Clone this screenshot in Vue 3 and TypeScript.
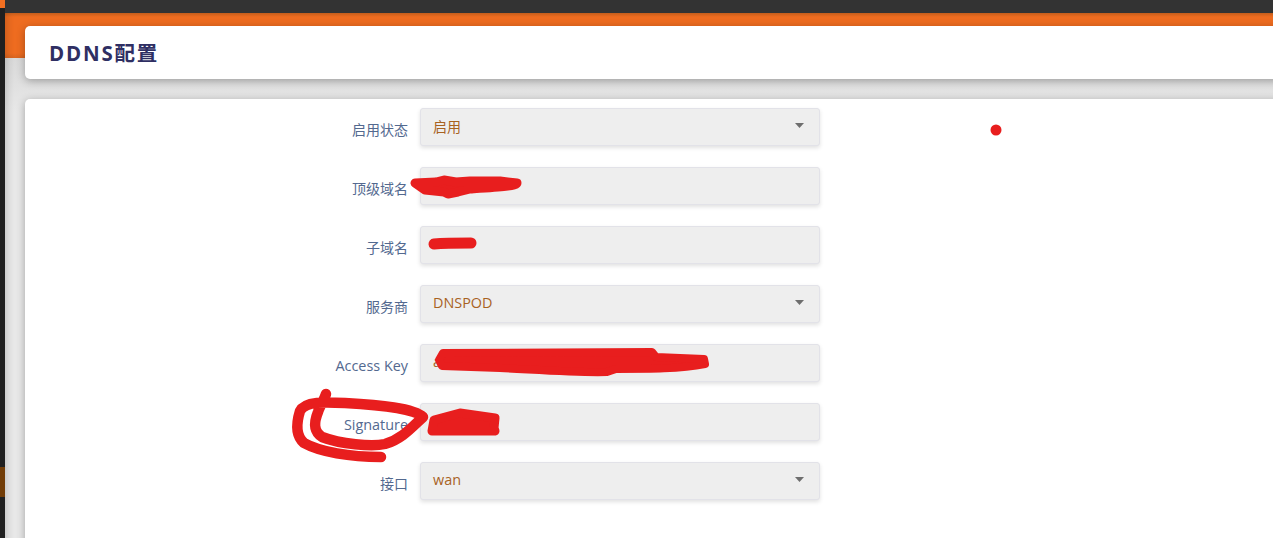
<script setup lang="ts">
interface Field {
  label: string
  value: string
  select: boolean
}

const fields: Field[] = [
  { label: '启用状态', value: '启用', select: true },
  { label: '顶级域名', value: '', select: false },
  { label: '子域名', value: '', select: false },
  { label: '服务商', value: 'DNSPOD', select: true },
  { label: 'Access Key', value: 'a', select: false },
  { label: 'Signature', value: '', select: false },
  { label: '接口', value: 'wan', select: true },
]

const isLatin = (s: string): boolean => /^[\x20-\x7e]+$/.test(s)
</script>

<template>
  <div class="page">
    <aside class="rail">
      <div class="rail-top"></div>
      <div class="rail-mark"></div>
    </aside>
    <div class="shell">
      <div class="topbar"></div>
      <main class="main">
        <header class="card title-card">
          <h1 class="title">DDNS配置</h1>
        </header>
        <section class="card form-card">
          <div v-for="f in fields" :key="f.label" class="row">
            <label class="label" :class="{ latin: isLatin(f.label) }">{{ f.label }}</label>
            <div class="control">
              <span class="value" :class="{ latin: isLatin(f.value) }">{{ f.value }}</span>
              <svg v-if="f.select" class="caret" width="9" height="5" viewBox="0 0 9 5">
                <path d="M0 0H9L4.5 5Z" fill="#6e6e6e" />
              </svg>
            </div>
          </div>
        </section>
      </main>
    </div>
    <svg class="ink" width="1273" height="538" viewBox="0 0 1273 538" fill="none" stroke="#e81e1e" stroke-linecap="round" stroke-linejoin="round">
      <circle cx="996" cy="130" r="5.5" fill="#e81e1e" stroke="none" />
      <path d="M415 183L436 182L444 180L456 182L470 181L500 181L517 183C517 186 500 187 470 189L458 192L448 194L444 192L425 190Z" fill="#e81e1e" stroke-width="9" />
      <path d="M434 244C445 243 458 243 471 243" stroke-width="11" />
      <path d="M443 353L652 352L656 357L704 359L705 364C680 369 650 369 616 369L607 372C580 373 540 370 500 368L442 366L439 360Z" fill="#e81e1e" stroke-width="8" />
      <path d="M326 394C324 400 320 406 318 412C314 422 313 431 322 437C340 444 372 447 385 444C402 439 412 427 423 417C414 408 380 405 345 403C325 402 305 401 300 411C296 424 296 436 304 443C320 452 350 457 381 457" stroke-width="10.5" />
      <path d="M434 420L460 413L495 418L494 428L495 431L432 431Z" fill="#e81e1e" stroke-width="9" />
    </svg>
  </div>
</template>

<style>
html, body { margin: 0; overflow: hidden; background: #e2e2e2; }
</style>

<style scoped>
.page {
  position: relative;
  display: flex;
  width: 1273px;
  height: 538px;
  overflow: hidden;
  font-family: "Open Sans", "Noto Sans CJK SC", sans-serif;
}
.rail {
  flex: 0 0 5px;
  display: flex;
  flex-direction: column;
  background: #202020;
}
.rail-top { height: 8px; background: #f26f21; margin-bottom: 459px; }
.rail-mark { height: 30px; background: #723d08; }
.shell { flex: 1; min-width: 0; display: flex; flex-direction: column; }
.topbar { flex: 0 0 13px; background: #333333; }
.main {
  flex: 1;
  padding: 13px 0 0 20px;
  background: linear-gradient(#c9601d 0, #ee6c20 4px, #ee6c20 40px, #d8641f 45px, #d9d9d9 45px, #e8e8e8 100px);
  box-shadow: inset 6px 0 8px -5px rgba(0, 0, 0, 0.2);
}
.card {
  margin-right: -12px;
  background: #fff;
  border-radius: 5px;
  box-shadow: 0 2px 8px rgba(0, 0, 0, 0.3);
}
.title-card {
  height: 53px;
  box-sizing: border-box;
  display: flex;
  align-items: center;
  padding: 0 0 2px 24px;
  margin-bottom: 20px;
}
.title {
  margin: 0;
  font-size: 20.5px;
  font-weight: 700;
  letter-spacing: 1.8px;
  color: #2f2f63;
}
.form-card { height: 460px; padding-top: 9px; box-sizing: border-box; }
.row { display: flex; align-items: flex-start; margin-bottom: 21px; }
.label {
  width: 395px;
  margin-top: 12px;
  padding-right: 12px;
  box-sizing: border-box;
  text-align: right;
  font-size: 14px;
  line-height: 19px;
  color: #53698f;
}
.control {
  width: 400px;
  height: 38px;
  box-sizing: border-box;
  display: flex;
  align-items: center;
  justify-content: space-between;
  padding: 0 15px 3px 12px;
  background: #eeeeee;
  border: 1px solid #e2e2e8;
  border-radius: 3px;
  box-shadow: 0 2px 4px rgba(0, 0, 0, 0.12);
}
.value { font-size: 14px; color: #a8621f; }
.latin { font-size: 14.4px; }
.caret { margin-bottom: 1px; }
.ink { position: absolute; left: 0; top: 0; pointer-events: none; }
</style>
